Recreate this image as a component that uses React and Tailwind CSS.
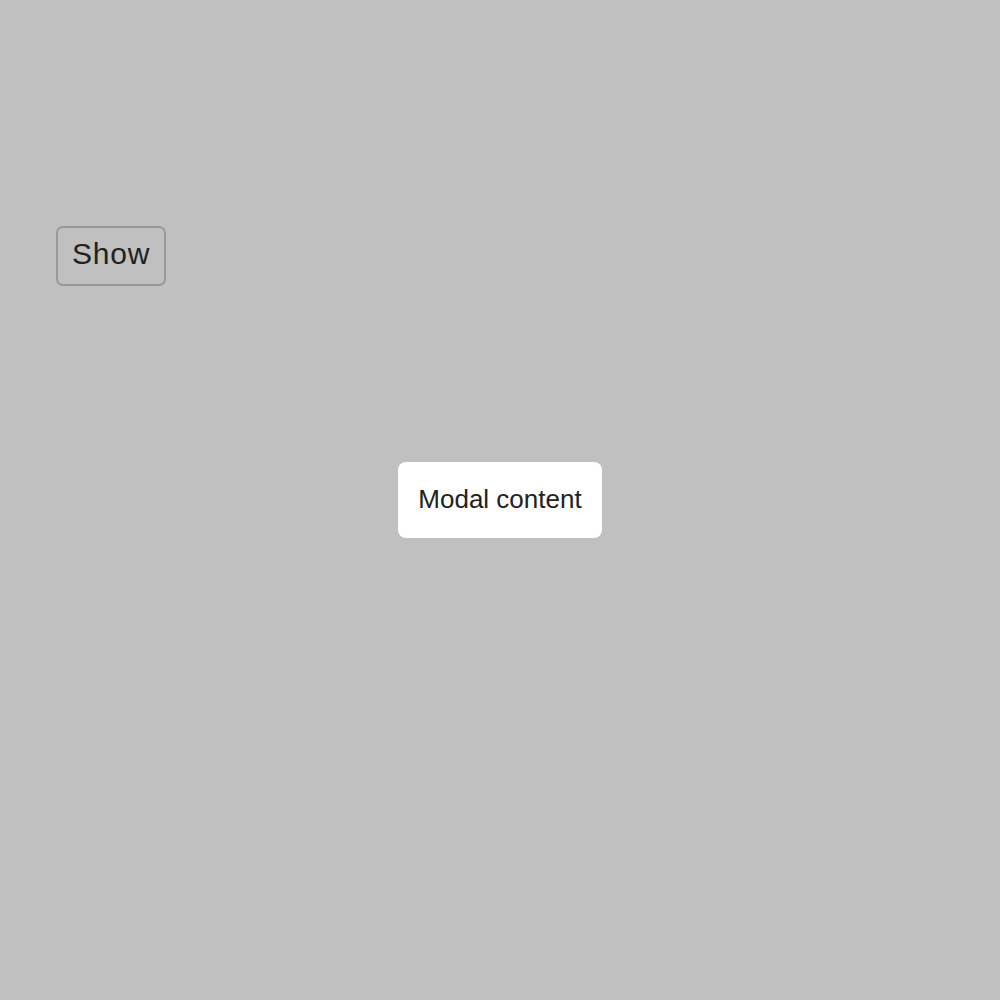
export default function App() {
    return (
        <div className="min-h-screen bg-[#c0c0c0] pt-[226px] pl-[56px] font-['Liberation_Sans',Arial,sans-serif]">
            {/* Trigger */}
            <button className="h-[60px] w-[110px] pb-[5px] border-2 border-[#999999] rounded-[7px] bg-[#c0c0c0] text-[30px] leading-none tracking-[0.8px] text-[#222222]">
                Show
            </button>

            {/* Modal */}
            <div className="fixed inset-0 flex items-center justify-center">
                <div className="bg-white rounded-[8px] px-[20px] pt-[20px] pb-[22px] text-[26px] leading-[34px] text-[#222222]">
                    Modal content
                </div>
            </div>
        </div>
    );
}
